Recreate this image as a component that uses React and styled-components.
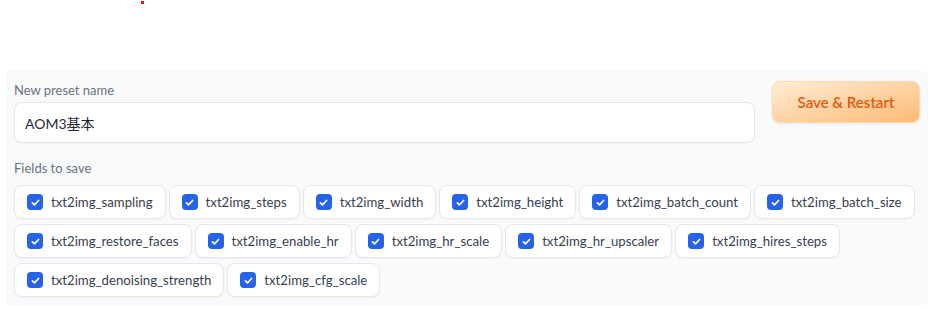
import React from "react";
import styled, { createGlobalStyle } from "styled-components";

const GlobalStyle = createGlobalStyle`
  body {
    margin: 0;
    background: #ffffff;
    font-family: "Lato", "Noto Sans CJK JP", sans-serif;
  }
`;

const fields = [
  "txt2img_sampling",
  "txt2img_steps",
  "txt2img_width",
  "txt2img_height",
  "txt2img_batch_count",
  "txt2img_batch_size",
  "txt2img_restore_faces",
  "txt2img_enable_hr",
  "txt2img_hr_scale",
  "txt2img_hr_upscaler",
  "txt2img_hires_steps",
  "txt2img_denoising_strength",
  "txt2img_cfg_scale",
];

const CheckIcon = () => (
  <svg width="11" height="11" viewBox="0 0 16 16" fill="none">
    <path
      d="M3.5 8.5l3 3 6-6.5"
      stroke="#fff"
      strokeWidth="2.4"
      strokeLinecap="round"
      strokeLinejoin="round"
    />
  </svg>
);

export default function App() {
  return (
    <>
      <GlobalStyle />
      <Page>
        <Dot />
        <Panel>
          <TopRow>
            <NameBlock>
              <Label>New preset name</Label>
              <TextInput defaultValue="AOM3基本" />
            </NameBlock>
            <SaveButton>Save &amp; Restart</SaveButton>
          </TopRow>
          <Label>Fields to save</Label>
          <Fields>
            {fields.map((f) => (
              <FieldItem key={f}>
                <Box>
                  <CheckIcon />
                </Box>
                <FieldText>{f}</FieldText>
              </FieldItem>
            ))}
          </Fields>
        </Panel>
      </Page>
    </>
  );
}

const Page = styled.div`
  width: 932px;
  height: 309px;
  position: relative;
  padding: 70px 0 0 6px;
  box-sizing: border-box;
`;

const Dot = styled.span`
  position: absolute;
  left: 141px;
  top: 1px;
  width: 3px;
  height: 3px;
  background: #e8112d;
`;

const Panel = styled.div`
  width: 922px;
  box-sizing: border-box;
  background: #f9fafb;
  border-radius: 8px;
  padding: 11px 8px 9px 8px;
`;

const TopRow = styled.div`
  display: flex;
  align-items: flex-start;
  gap: 17px;
  margin-bottom: 16px;
`;

const NameBlock = styled.div`
  display: flex;
  flex-direction: column;
  width: 741px;
`;

const Label = styled.div`
  font-size: 13px;
  color: #6b7280;
  line-height: 18px;
  margin-bottom: 3px;
`;

const TextInput = styled.input`
  box-sizing: border-box;
  height: 41px;
  border: 1px solid #e5e7eb;
  border-radius: 8px;
  background: #ffffff;
  padding: 0 10px;
  font-family: "Lato", "Noto Sans CJK JP", sans-serif;
  font-size: 14px;
  color: #1f2937;
  box-shadow: 0 1px 2px rgba(0, 0, 0, 0.03);
  outline: none;
`;

const SaveButton = styled.button`
  width: 148px;
  height: 42px;
  border: 1px solid #fed7aa;
  border-radius: 8px;
  background: linear-gradient(to bottom right, #ffedd5, #fdba74);
  color: #ea580c;
  font-family: "Lato", sans-serif;
  font-weight: 600;
  font-size: 15px;
  cursor: pointer;
  box-shadow: 0 1px 3px rgba(0, 0, 0, 0.08);
`;

const Fields = styled.div`
  display: flex;
  flex-wrap: wrap;
  gap: 5px 3px;
  margin-top: 8px;
`;

const FieldItem = styled.label`
  display: flex;
  align-items: center;
  gap: 8px;
  height: 34px;
  box-sizing: border-box;
  padding: 0 12px;
  background: #ffffff;
  border: 1px solid #e5e7eb;
  border-radius: 8px;
  box-shadow: 0 1px 2px rgba(0, 0, 0, 0.04);
`;

const Box = styled.span`
  width: 16px;
  height: 16px;
  border-radius: 4px;
  background: #2563eb;
  display: flex;
  align-items: center;
  justify-content: center;
`;

const FieldText = styled.span`
  font-size: 13.2px;
  color: #374151;
`;
